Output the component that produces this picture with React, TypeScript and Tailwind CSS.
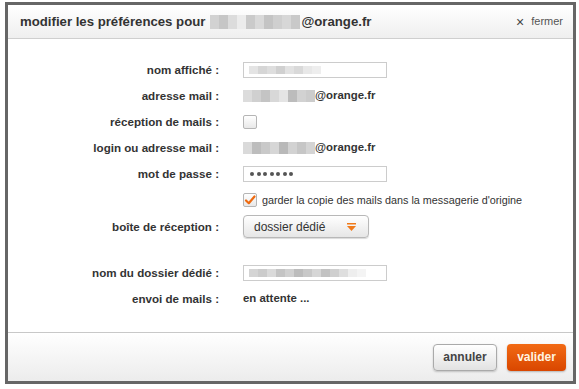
import React from "react";

const Blur = ({ tones, h = "h-[12px]" }: { tones: string[]; h?: string }) => (
    <span className={`inline-flex ${h} align-middle`}>
        {tones.map((c, i) => (
            <span key={i} className="w-[9px] h-full" style={{ backgroundColor: c }} />
        ))}
    </span>
);

const Row = ({ label, children, tall }: { label: string; children?: React.ReactNode; tall?: boolean }) => (
    <div className={`flex items-center ${tall ? "h-[27px]" : "h-[26px]"}`}>
        <div className="w-[211px] text-right font-bold text-[11.6px] text-[#333]">{label}</div>
        <div className="ml-[24px] flex items-center text-[11px] text-[#333]">{children}</div>
    </div>
);

export default function App() {
    return (
        <div className="w-[579px] h-[389px] bg-white pt-[2px] pl-[5px]" style={{ fontFamily: '"Liberation Sans", Arial, sans-serif' }}>
            <div className="w-[571px] h-[382px] border-[3px] border-[#666] flex flex-col bg-white">
                <div className="h-[34px] shrink-0 flex items-center justify-between pl-[12px] pr-[10px] border-b border-[#cfcfcf] bg-gradient-to-b from-white to-[#efefef]">
                    <div className="flex items-center font-bold text-[13.2px] text-[#333]">
                        <span>modifier les préférences pour</span>
                        <span className="ml-[5px] mr-[1px]">
                            <Blur h="h-[14px]" tones={["#d2d2d2", "#c6c6c6", "#dcdcdc", "#ececec", "#cacaca", "#d9d9d9", "#c4c4c4", "#cfcfcf", "#d7d7d7", "#c9c9c9"]} />
                        </span>
                        <span>@orange.fr</span>
                    </div>
                    <div className="flex items-center text-[11px] text-[#555]">
                        <span className="text-[14px] text-[#444] mr-[7px] leading-none">×</span>
                        fermer
                    </div>
                </div>
                <div className="flex-1 pt-[18px]">
                    <Row label="nom affiché :">
                        <div className="w-[144px] h-[16px] border border-[#ccc] flex items-center pl-[5px]">
                            <Blur h="h-[8px]" tones={["#e4e4e4", "#d6d6d6", "#dedede", "#d0d0d0", "#e2e2e2", "#d9d9d9", "#e8e8e8", "#eeeeee"]} />
                        </div>
                    </Row>
                    <Row label="adresse mail :">
                        <Blur tones={["#dcdcdc", "#d0d0d0", "#c4c4c4", "#d8d8d8", "#e4e4e4", "#bcbcbc", "#d2d2d2", "#cccccc"]} />
                        <span className="font-bold text-[11.4px]">@orange.fr</span>
                    </Row>
                    <Row label="réception de mails :">
                        <div className="w-[14px] h-[14px] rounded-[2px] border border-[#b5b5b5] bg-gradient-to-b from-white to-[#e8e8e8]" />
                    </Row>
                    <Row label="login ou adresse mail :">
                        <Blur tones={["#dadada", "#bdbdbd", "#c9c9c9", "#d6d6d6", "#b9b9b9", "#d2d2d2", "#c6c6c6", "#d4d4d4"]} />
                        <span className="font-bold text-[11.4px]">@orange.fr</span>
                    </Row>
                    <Row label="mot de passe :">
                        <div className="w-[144px] h-[16px] border border-[#ccc] flex items-center pl-[6px] gap-[2.5px]">
                            {Array.from({ length: 7 }).map((_, i) => (
                                <span key={i} className="w-[4px] h-[4px] rounded-full bg-[#555]" />
                            ))}
                        </div>
                    </Row>
                    <Row label="">
                        <div className="w-[14px] h-[14px] rounded-[2px] border border-[#b5b5b5] bg-gradient-to-b from-white to-[#e8e8e8] flex items-center justify-center">
                            <svg width="12" height="12" viewBox="0 0 12 12">
                                <path d="M2 6.5 L4.8 9.2 L10.5 2.5" fill="none" stroke="#ee6a10" strokeWidth="2.2" strokeLinecap="round" strokeLinejoin="round" />
                            </svg>
                        </div>
                        <span className="ml-[5px] text-[10.8px] text-[#333]">garder la copie des mails dans la messagerie d'origine</span>
                    </Row>
                    <Row label="boîte de réception :" tall>
                        <div className="w-[126px] h-[23px] rounded-[4px] border border-[#b8b8b8] bg-gradient-to-b from-white to-[#e6e6e6] shadow-[0_1px_1px_rgba(0,0,0,0.15)] flex items-center justify-between pl-[10px] pr-[12px]">
                            <span className="text-[12px] text-[#333]">dossier dédié</span>
                            <svg width="9" height="8" viewBox="0 0 9 8">
                                <rect x="0" y="0" width="9" height="1.5" fill="#f07a1a" />
                                <path d="M0 3 L9 3 L4.5 8 Z" fill="#f07a1a" />
                            </svg>
                        </div>
                    </Row>
                    <div className="h-[20px]" />
                    <Row label="nom du dossier dédié :">
                        <div className="w-[144px] h-[16px] border border-[#ccc] flex items-center pl-[5px]">
                            <Blur h="h-[8px]" tones={["#d4d4d4", "#cbcbcb", "#dadada", "#c4c4c4", "#d0d0d0", "#bcbcbc", "#c8c8c8", "#d6d6d6", "#c2c2c2", "#cfcfcf", "#dedede", "#eeeeee", "#f4f4f4"]} />
                        </div>
                    </Row>
                    <Row label="envoi de mails :">
                        <span className="font-bold text-[11.4px]">en attente ...</span>
                    </Row>
                </div>
                <div className="h-[49px] shrink-0 border-t border-[#c8c8c8] bg-gradient-to-b from-white to-[#ececec] flex items-center justify-end gap-[10px] pr-[7px]">
                    <button className="w-[64px] h-[27px] rounded-[4px] border border-[#aaa] bg-gradient-to-b from-white to-[#e2e2e2] shadow-[0_1px_2px_rgba(0,0,0,0.2)] text-[12px] font-bold text-[#444]">
                        annuler
                    </button>
                    <button className="w-[59px] h-[27px] rounded-[4px] bg-gradient-to-b from-[#f26a14] to-[#d94600] shadow-[0_1px_2px_rgba(0,0,0,0.25)] text-[12px] font-bold text-[#fff4e0]">
                        valider
                    </button>
                </div>
            </div>
        </div>
    );
}
